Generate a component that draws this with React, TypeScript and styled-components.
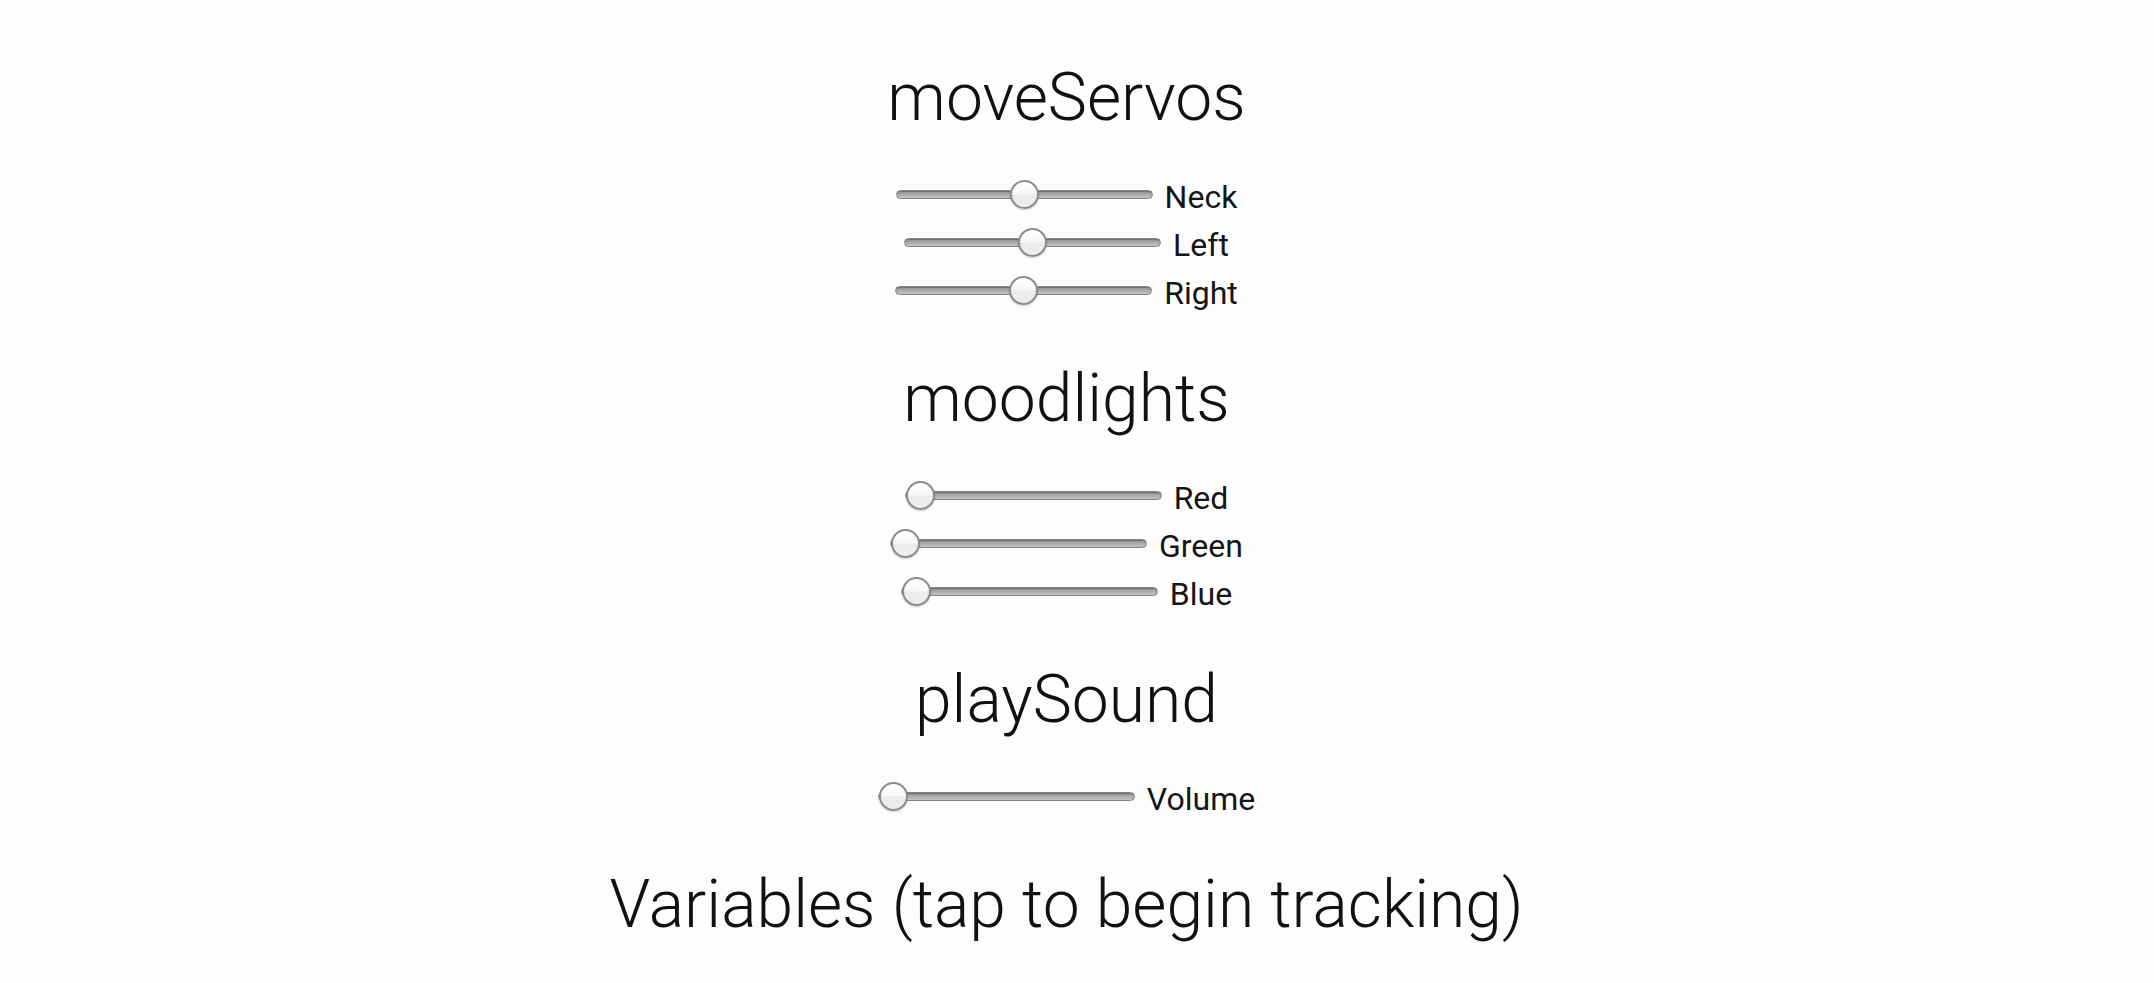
import React, { useState } from 'react'
import styled, { createGlobalStyle } from 'styled-components'

type SliderDef = { name: string; min: number; max: number; value: number }
type Group = { title: string; sliders: SliderDef[] }

const GROUPS: Group[] = [
    {
        title: 'moveServos',
        sliders: [
            { name: 'Neck', min: 0, max: 180, value: 90 },
            { name: 'Left', min: 0, max: 180, value: 90 },
            { name: 'Right', min: 0, max: 180, value: 90 },
        ],
    },
    {
        title: 'moodlights',
        sliders: [
            { name: 'Red', min: 0, max: 255, value: 0 },
            { name: 'Green', min: 0, max: 255, value: 0 },
            { name: 'Blue', min: 0, max: 255, value: 0 },
        ],
    },
    {
        title: 'playSound',
        sliders: [{ name: 'Volume', min: 0, max: 100, value: 0 }],
    },
]

const SliderRow: React.FC<{ def: SliderDef }> = ({ def }) => {
    const [value, setValue] = useState(def.value)
    return (
        <Row>
            <Range
                min={def.min}
                max={def.max}
                value={value}
                onChange={e => setValue(Number(e.target.value))}
            />
            <Label>{def.name}</Label>
        </Row>
    )
}

const App: React.FC = () => {
    return (
        <>
            <GlobalStyle />
            <Page>
                {GROUPS.map(group => (
                    <Section key={group.title}>
                        <Title>{group.title}</Title>
                        <Rows>
                            {group.sliders.map(s => (
                                <SliderRow key={s.name} def={s} />
                            ))}
                        </Rows>
                    </Section>
                ))}
                <Title>Variables (tap to begin tracking)</Title>
            </Page>
        </>
    )
}

export default App

const GlobalStyle = createGlobalStyle`
    html, body {
        margin: 0;
        padding: 0;
        background: #fdfdfd;
    }
    body {
        font-family: Roboto, "Liberation Sans", Arial, sans-serif;
        color: #111;
    }
`

const Page = styled.div`
    display: flex;
    flex-direction: column;
    align-items: center;
    gap: 49px;
    padding: 62px 21px 40px 0;
`

const Section = styled.section`
    display: flex;
    flex-direction: column;
    align-items: center;
`

const Title = styled.h2`
    margin: 0;
    font-size: 66px;
    font-weight: 300;
    line-height: 72px;
    white-space: nowrap;
`

const Rows = styled.div`
    display: flex;
    flex-direction: column;
    align-items: center;
    margin-top: 36px;
`

const Row = styled.div`
    display: flex;
    align-items: center;
    gap: 12px;
    height: 48px;
`

const Label = styled.span`
    font-size: 32px;
    font-weight: 400;
    line-height: 32px;
    padding-top: 6px;
    color: #151515;
`

const Range = styled.input.attrs({ type: 'range' })`
    -webkit-appearance: none;
    appearance: none;
    width: 257px;
    height: 30px;
    margin: 0;
    background: transparent;
    outline: none;

    &::-webkit-slider-runnable-track {
        height: 9px;
        border-radius: 5px;
        box-sizing: border-box;
        border: 1px solid #858585;
        background: linear-gradient(to bottom, #8f8f8f 0%, #a6a6a6 40%, #c4c4c4 100%);
        box-shadow: inset 0 1px 1px rgba(0, 0, 0, 0.25);
    }

    &::-webkit-slider-thumb {
        -webkit-appearance: none;
        box-sizing: border-box;
        width: 29px;
        height: 29px;
        margin-top: -11px;
        border-radius: 50%;
        border: 2px solid #8c8c8c;
        background: linear-gradient(to bottom, #ffffff 0%, #f8f8f8 48%, #ebebeb 52%, #eeeeee 100%);
        box-shadow: 0 1px 2px rgba(0, 0, 0, 0.18);
    }
`
